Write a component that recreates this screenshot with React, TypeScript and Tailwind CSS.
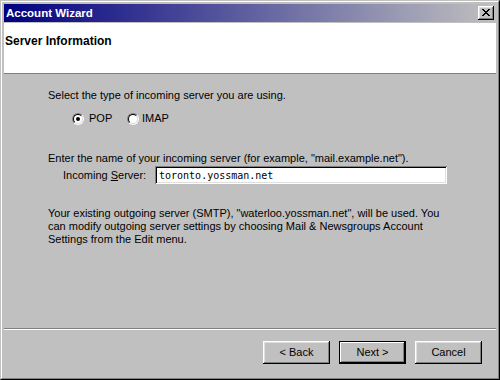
import React from 'react';

const sans = "font-['Liberation_Sans',Arial,sans-serif]";

function CloseButton() {
  return (
    <div className="w-[16px] h-[14px] bg-[#c0c0c0] flex items-center justify-center shadow-[inset_-1px_-1px_#000,inset_1px_1px_#fff,inset_-2px_-2px_#808080,inset_2px_2px_#dfdfdf]">
      <svg width="8" height="7" viewBox="0 0 8 7" shapeRendering="crispEdges" className="-mt-px">
        <path
          fill="#000"
          d="M0 0h2v1H0zM6 0h2v1H6zM1 1h2v1H1zM5 1h2v1H5zM2 2h4v1H2zM3 3h2v1H3zM2 4h4v1H2zM1 5h2v1H1zM5 5h2v1H5zM0 6h2v1H0zM6 6h2v1H6z"
        />
      </svg>
    </div>
  );
}

function Radio({ checked }: { checked?: boolean }) {
  return (
    <div className="w-[12px] h-[12px] rounded-full border border-t-[#808080] border-l-[#808080] border-r-white border-b-white">
      <div className="w-full h-full rounded-full bg-white border border-t-black border-l-black border-r-[#dfdfdf] border-b-[#dfdfdf] flex items-center justify-center">
        {checked && <div className="w-[4px] h-[4px] rounded-full bg-black" />}
      </div>
    </div>
  );
}

function Button({ label, isDefault = false }: { label: string; isDefault?: boolean }) {
  return (
    <button
      className={
        isDefault
          ? 'w-[67px] h-[23px] border border-black bg-[#c0c0c0] shadow-[inset_-1px_-1px_#000,inset_1px_1px_#fff,inset_-2px_-2px_#808080] text-black'
          : 'w-[67px] h-[23px] bg-[#c0c0c0] shadow-[inset_-1px_-1px_#000,inset_1px_1px_#fff,inset_-2px_-2px_#808080,inset_2px_2px_#dfdfdf] text-black'
      }
    >
      {label}
    </button>
  );
}

export default function App() {
  return (
    <div className={`${sans} w-[500px] h-[380px] bg-[#c0c0c0] border border-t-[#c0c0c0] border-l-[#c0c0c0] border-r-black border-b-black text-[11px] leading-[13px] text-black`}>
      <div className="h-full border border-t-white border-l-white border-r-[#808080] border-b-[#808080] p-[2px] flex flex-col">
        {/* Title bar */}
        <div className="h-[18px] shrink-0 flex items-center justify-between pl-[2px] pr-[2px] bg-linear-to-r/srgb from-[#000080] to-[#c0c0c0]">
          <span className="text-white font-bold text-[11.5px]">Account Wizard</span>
          <CloseButton />
        </div>
        <div className="h-px shrink-0" />

        {/* Page header */}
        <div className="h-[51px] shrink-0 bg-white border-b border-[#808080] pt-[12px] pl-px font-bold text-[12px]">
          Server Information
        </div>

        {/* Body */}
        <div className="flex-1 pl-[44px] pt-[15px]">
          <p>Select the type of incoming server you are using.</p>

          <div className="mt-[10px] h-[13px] flex items-center pl-[24px]">
            <div className="w-[55px] flex items-center">
              <Radio checked />
              <span className="ml-[5px]">POP</span>
            </div>
            <div className="flex items-center">
              <Radio />
              <span className="ml-[3px]">IMAP</span>
            </div>
          </div>

          <p className="mt-[27px]">Enter the name of your incoming server (for example, "mail.example.net").</p>

          <div className="mt-px flex items-center pl-[15px]">
            <span className="w-[92px]">
              Incoming <u>S</u>erver:
            </span>
            <div className="w-[292px] h-[18px] bg-white flex items-center pl-[4px] shadow-[inset_1px_1px_#808080,inset_-1px_-1px_#fff,inset_2px_2px_#000,inset_-2px_-2px_#dfdfdf] font-['DejaVu_Sans_Mono',monospace] text-[10px]">
              toronto.yossman.net
            </div>
          </div>

          <p className="mt-[23px] whitespace-nowrap">
            Your existing outgoing server (SMTP), "waterloo.yossman.net", will be used. You
            <br />
            can modify outgoing server settings by choosing Mail &amp; Newsgroups Account
            <br />
            Settings from the Edit menu.
          </p>
        </div>

        {/* Footer */}
        <div className="shrink-0 border-t border-[#808080]">
          <div className="h-[47px] border-t border-white flex justify-end items-start pt-[11px] pr-[14px] gap-[9px]">
            <Button label="< Back" />
            <Button label="Next >" isDefault />
            <Button label="Cancel" />
          </div>
        </div>
      </div>
    </div>
  );
}
